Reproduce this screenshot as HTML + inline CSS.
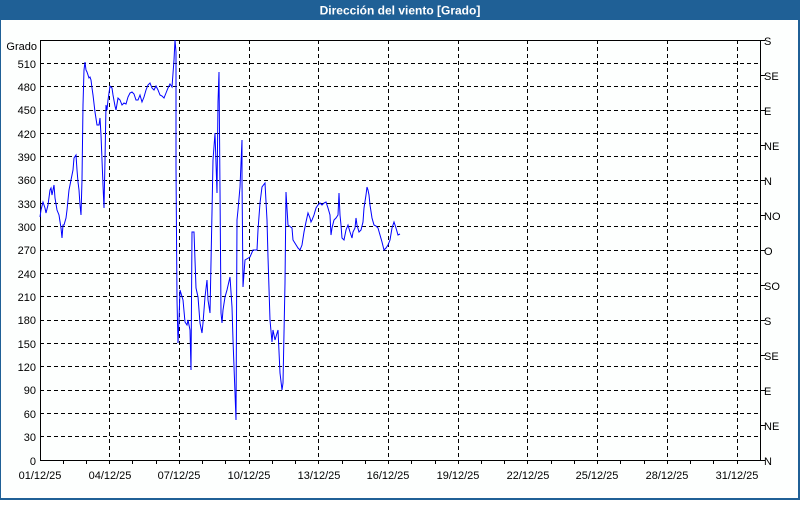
<!DOCTYPE html>
<html><head><meta charset="utf-8"><style>
html,body{margin:0;padding:0;background:#fff;}
body{width:800px;height:500px;overflow:hidden;font-family:"Liberation Sans",sans-serif;}
</style></head><body>
<svg width="800" height="500" xmlns="http://www.w3.org/2000/svg" font-family="Liberation Sans, sans-serif" font-size="11">
<rect x="0" y="0" width="800" height="500" fill="#1f6096"/>
<rect x="1" y="20" width="797" height="478" fill="#fdfffe"/>
<text x="400" y="14.5" fill="#fff" font-weight="bold" font-size="12" text-anchor="middle">Dirección del viento [Grado]</text>
<g stroke="#000" stroke-width="1" stroke-dasharray="4,3" fill="none" shape-rendering="crispEdges">
<path d="M40 436.5H760M40 413.5H760M40 390.5H760M40 366.5H760M40 343.5H760M40 320.5H760M40 296.5H760M40 273.5H760M40 250.5H760M40 226.5H760M40 203.5H760M40 180.5H760M40 156.5H760M40 133.5H760M40 110.5H760M40 86.5H760M40 63.5H760"/>
<path d="M109.5 40V460M179.5 40V460M249.5 40V460M318.5 40V460M388.5 40V460M458.5 40V460M527.5 40V460M597.5 40V460M667.5 40V460M737.5 40V460"/>
</g>
<g stroke="#000" stroke-width="1" fill="none" shape-rendering="crispEdges">
<path d="M40.5 40V460.5H760.5V40M40 40.5H760"/>
<path d="M63.5 460V464M86.5 460V464M109.5 460V464M132.5 460V464M156.5 460V464M179.5 460V464M202.5 460V464M225.5 460V464M249.5 460V464M272.5 460V464M295.5 460V464M318.5 460V464M342.5 460V464M365.5 460V464M388.5 460V464M411.5 460V464M435.5 460V464M458.5 460V464M481.5 460V464M504.5 460V464M527.5 460V464M551.5 460V464M574.5 460V464M597.5 460V464M620.5 460V464M644.5 460V464M667.5 460V464M690.5 460V464M713.5 460V464M737.5 460V464"/>
<path d="M760 40.5H765M760 75.5H765M760 110.5H765M760 145.5H765M760 180.5H765M760 215.5H765M760 250.5H765M760 285.5H765M760 320.5H765M760 355.5H765M760 390.5H765M760 425.5H765M760 460.5H765"/>
</g>
<g fill="#000" text-anchor="end">
<text x="37" y="50">Grado</text>
<text x="36" y="68">510</text><text x="36" y="91">480</text><text x="36" y="114">450</text><text x="36" y="138">420</text><text x="36" y="161">390</text><text x="36" y="184">360</text><text x="36" y="208">330</text><text x="36" y="231">300</text><text x="36" y="254">270</text><text x="36" y="278">240</text><text x="36" y="301">210</text><text x="36" y="324">180</text><text x="36" y="348">150</text><text x="36" y="371">120</text><text x="36" y="394">90</text><text x="36" y="418">60</text><text x="36" y="441">30</text><text x="36" y="465">0</text>
</g>
<g fill="#000">
<text x="764" y="45">S</text><text x="764" y="80">SE</text><text x="764" y="115">E</text><text x="764" y="150">NE</text><text x="764" y="185">N</text><text x="764" y="220">NO</text><text x="764" y="255">O</text><text x="764" y="290">SO</text><text x="764" y="325">S</text><text x="764" y="360">SE</text><text x="764" y="395">E</text><text x="764" y="430">NE</text><text x="764" y="465">N</text>
</g>
<g fill="#000" text-anchor="middle">
<text x="40" y="479">01/12/25</text><text x="110" y="479">04/12/25</text><text x="179" y="479">07/12/25</text><text x="249" y="479">10/12/25</text><text x="319" y="479">13/12/25</text><text x="388" y="479">16/12/25</text><text x="458" y="479">19/12/25</text><text x="528" y="479">22/12/25</text><text x="597" y="479">25/12/25</text><text x="667" y="479">28/12/25</text><text x="737" y="479">31/12/25</text>
</g>
<polyline fill="none" stroke="#0000ff" stroke-width="1" points="40,217 41,210 43,202 45,208 46,213 48,205 50,190 51,188 52,195 53,190 54,185 55,198 57,210 59,215 61,228 62,238 63,225 64,225 66,218 67,210 69,190 71,180 73,170 74,158 76,155 77,170 78,182 79,190 80,205 81,215 82,180 83,105 84,70 85,62 86,70 87,72 89,78 90,77 91,80 92,88 93,95 95,112 97,125 99,125 100,118 101,135 102,160 103,185 104,208 105,160 106,105 107,110 108,100 110,86 112,88 113,95 115,106 116,110 118,98 120,100 122,105 124,103 126,104 128,97 130,93 132,92 134,94 136,100 138,100 140,95 142,102 144,97 146,90 148,85 150,83 152,88 154,90 156,86 158,90 160,95 162,96 164,98 166,93 168,88 170,84 172,87 174,60 175,40 176,52 176,167 177,300 178,343 179,320 180,290 183,300 185,322 187,325 188,320 190,330 191,370 192,232 194,232 196,288 198,297 200,323 202,333 203,323 205,297 207,280 208,300 210,313 212,212 213,160 215,133 217,193 218,102 219,72 220,190 221,313 222,323 223,310 225,297 227,290 230,277 232,307 233,340 235,393 236,420 237,220 238,210 240,187 242,140 242,180 243,287 245,260 250,257 253,250 257,250 258,230 260,203 262,187 265,183 267,220 268,257 270,320 272,342 273,330 275,340 278,330 280,373 282,390 283,383 285,283 286,192 288,225 292,228 293,240 298,248 300,250 302,245 304,232 306,222 308,213 310,218 311,222 312,220 314,215 316,208 318,205 320,203 322,205 324,203 326,202 328,208 330,215 331,235 332,228 334,220 336,218 338,215 339,193 340,215 341,225 342,238 344,240 346,230 348,225 350,232 352,238 353,232 355,228 356,218 357,225 359,232 361,230 363,222 364,208 366,195 367,187 368,190 369,195 370,205 372,218 374,225 376,226 378,228 380,235 382,242 384,250 386,248 388,245 390,240 392,228 394,222 396,228 398,235 400,234"/>
</svg>
</body></html>
